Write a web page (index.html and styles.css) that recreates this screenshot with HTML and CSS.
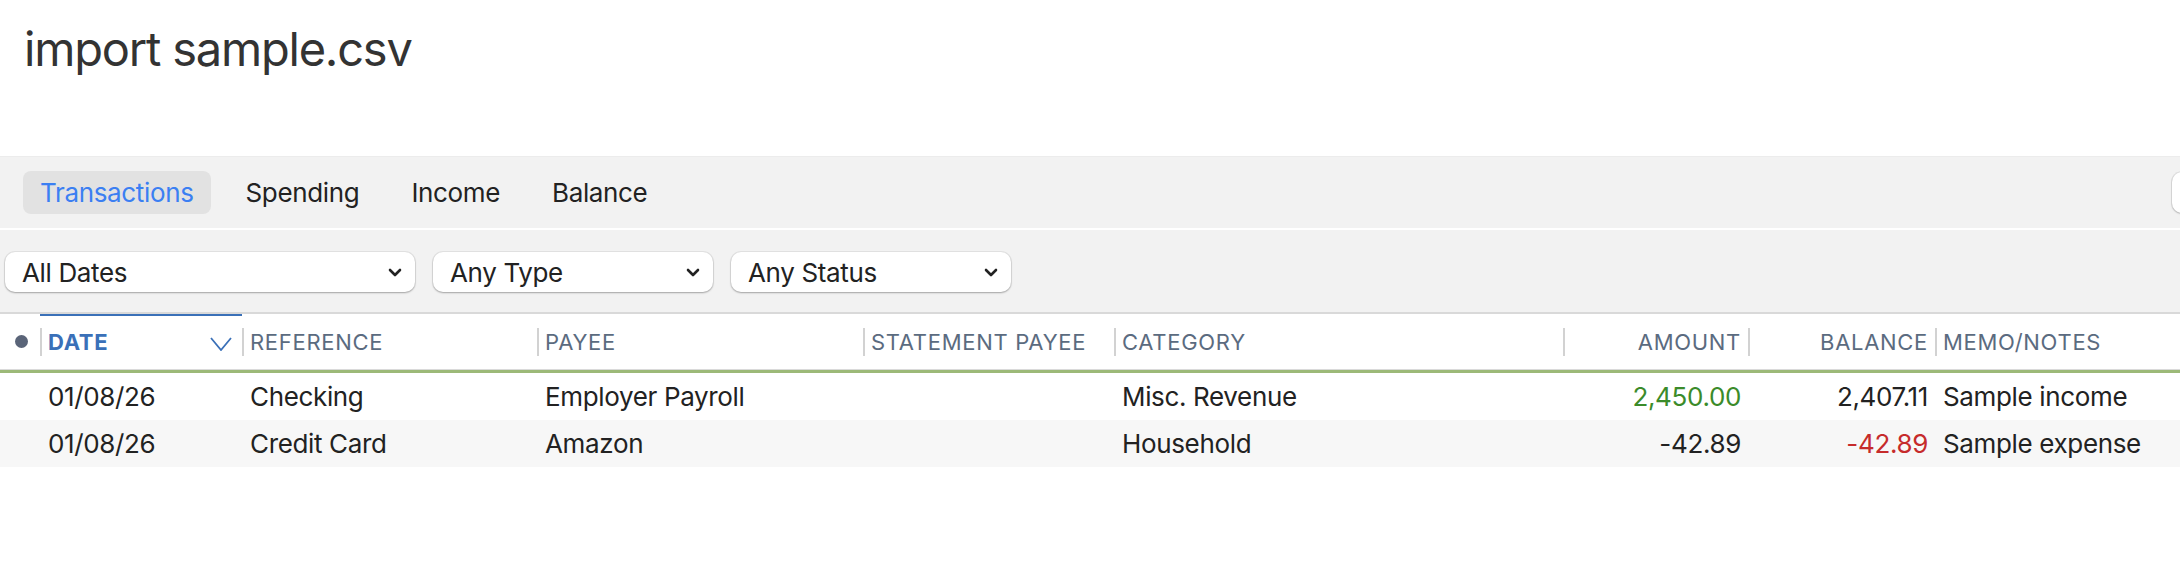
FILE: index.html
```html
<!DOCTYPE html>
<html lang="en">
<head>
<meta charset="utf-8">
<title>import sample.csv</title>
<link rel="stylesheet" href="styles.css">
</head>
<body>
<div class="page">
  <header class="title-bar">
    <h1 class="title">import sample.csv</h1>
  </header>

  <nav class="tabs">
    <div class="tab active">Transactions</div>
    <div class="tab">Spending</div>
    <div class="tab">Income</div>
    <div class="tab">Balance</div>
    <div class="search-box"></div>
  </nav>

  <div class="filters">
    <div class="select select-wide">
      <span>All Dates</span>
      <svg class="chev" viewBox="0 0 14 9" width="14" height="9"><path d="M2 2 L7 7 L12 2" fill="none" stroke="#222" stroke-width="2.6" stroke-linecap="round" stroke-linejoin="round"/></svg>
    </div>
    <div class="select">
      <span>Any Type</span>
      <svg class="chev" viewBox="0 0 14 9" width="14" height="9"><path d="M2 2 L7 7 L12 2" fill="none" stroke="#222" stroke-width="2.6" stroke-linecap="round" stroke-linejoin="round"/></svg>
    </div>
    <div class="select">
      <span>Any Status</span>
      <svg class="chev" viewBox="0 0 14 9" width="14" height="9"><path d="M2 2 L7 7 L12 2" fill="none" stroke="#222" stroke-width="2.6" stroke-linecap="round" stroke-linejoin="round"/></svg>
    </div>
  </div>

  <div class="table">
    <div class="grid thead">
      <div class="th th-dot"><span class="dot"></span></div>
      <div class="th th-date div">
        <span>DATE</span>
        <svg class="sort" viewBox="0 0 22 14" width="22" height="14"><path d="M1 1 L11 13 L21 1" fill="none" stroke="#3a70b8" stroke-width="1.8"/></svg>
      </div>
      <div class="th div">REFERENCE</div>
      <div class="th div">PAYEE</div>
      <div class="th div">STATEMENT PAYEE</div>
      <div class="th div">CATEGORY</div>
      <div class="th div num">AMOUNT</div>
      <div class="th div num">BALANCE</div>
      <div class="th div">MEMO/NOTES</div>
    </div>
    <div class="tbody">
      <div class="grid tr">
        <div class="td"></div>
        <div class="td">01/08/26</div>
        <div class="td">Checking</div>
        <div class="td">Employer Payroll</div>
        <div class="td"></div>
        <div class="td">Misc. Revenue</div>
        <div class="td num pos">2,450.00</div>
        <div class="td num">2,407.11</div>
        <div class="td">Sample income</div>
      </div>
      <div class="grid tr alt">
        <div class="td"></div>
        <div class="td">01/08/26</div>
        <div class="td">Credit Card</div>
        <div class="td">Amazon</div>
        <div class="td"></div>
        <div class="td">Household</div>
        <div class="td num">-42.89</div>
        <div class="td num neg">-42.89</div>
        <div class="td">Sample expense</div>
      </div>
    </div>
  </div>
</div>
</body>
</html>
```

FILE: styles.css
```css
* { box-sizing: border-box; }

html, body {
  margin: 0;
  padding: 0;
  background: #ffffff;
}

body {
  font-family: "Inter", "Liberation Sans", sans-serif;
  color: #222222;
  width: 2180px;
  overflow: hidden;
}

.title-bar {
  height: 156px;
  padding: 20px 0 0 24px;
}

.title {
  margin: 0;
  font-size: 47px;
  line-height: 58px;
  font-weight: 400;
  color: #333333;
  letter-spacing: -1.2px;
}

.tabs {
  height: 74px;
  background: #f2f2f2;
  border-top: 1px solid #ececec;
  border-bottom: 2px solid #ffffff;
  display: flex;
  align-items: center;
  gap: 18px;
  padding: 0 0 0 23px;
  overflow: hidden;
}

.tab {
  height: 43px;
  padding: 0 17px;
  display: flex;
  align-items: center;
  border-radius: 8px;
  font-size: 26px;
  letter-spacing: -0.35px;
  color: #222222;
}

.tab.active {
  background: #e2e2e2;
  color: #3b7ff2;
}

.search-box {
  margin-left: auto;
  margin-right: -192px;
  width: 200px;
  height: 41px;
  flex: none;
  background: #ffffff;
  border-radius: 10px;
  box-shadow: 0 0 0 1px rgba(0, 0, 0, 0.08), 0 1px 2px rgba(0, 0, 0, 0.2);
}

.filters {
  height: 84px;
  background: #f2f2f2;
  border-bottom: 2px solid #d9d9d9;
  display: flex;
  gap: 18px;
  padding: 22px 0 0 5px;
}

.select {
  width: 280px;
  height: 40px;
  background: #ffffff;
  border-radius: 10px;
  box-shadow: 0 0 0 1px rgba(0, 0, 0, 0.06), 0 1px 2px rgba(0, 0, 0, 0.28);
  display: flex;
  align-items: center;
  justify-content: space-between;
  padding: 0 13px 0 17px;
  font-size: 26px;
  letter-spacing: -0.35px;
  color: #222222;
}

.select-wide { width: 410px; }

.chev { display: block; }

.grid {
  display: grid;
  grid-template-columns: 40px 202px 295px 326px 251px 449px 185px 187px 1fr;
}

.thead {
  height: 56px;
  border-bottom: 1px solid #dadada;
}

.th {
  display: flex;
  align-items: center;
  padding: 0 7px 0 8px;
  font-size: 22px;
  letter-spacing: 0.7px;
  color: #5b6b80;
  white-space: nowrap;
}

.th.div {
  background: linear-gradient(#d2d2d2, #d2d2d2) left 14px / 2px 28px no-repeat;
}

.th-dot {
  justify-content: center;
  padding: 0 0 0 2px;
}

.dot {
  width: 13px;
  height: 13px;
  border-radius: 50%;
  background: #5a6478;
}

.th.th-date {
  justify-content: space-between;
  padding-right: 10px;
  font-weight: 700;
  color: #3a70b8;
  background:
    linear-gradient(#3a70b8, #3a70b8) left top / 100% 2px no-repeat,
    linear-gradient(#d2d2d2, #d2d2d2) left 14px / 2px 28px no-repeat;
}

.sort { display: block; margin-top: 4px; }

.th.num { justify-content: flex-end; }

.tbody {
  border-top: 3px solid #9cb978;
}

.tr {
  height: 47px;
  align-items: center;
}

.tr.alt { background: #f7f7f7; }

.td {
  padding: 0 7px 0 8px;
  font-size: 26px;
  letter-spacing: -0.35px;
  color: #222222;
  white-space: nowrap;
}

.td.num { text-align: right; }
.td.pos { color: #3b8b2a; }
.td.neg { color: #c62b2b; }
```
